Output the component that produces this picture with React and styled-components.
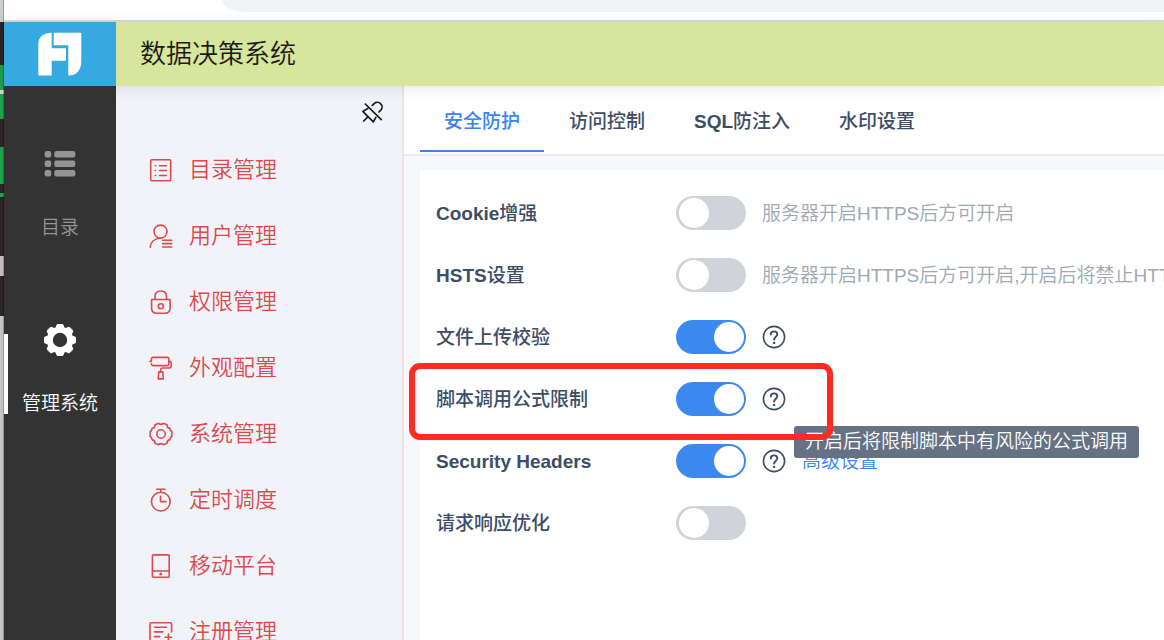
import React, { useState } from "react";
import styled, { createGlobalStyle } from "styled-components";

const GlobalStyle = createGlobalStyle`
  * {
    box-sizing: border-box;
  }

  body {
    margin: 0;
    overflow: hidden;
    background: #fff;
    font-family: "Liberation Sans", "Noto Sans CJK SC", sans-serif;
    font-size: 19px;
    font-weight: 350;
    line-height: 28px;
    color: #3d4d66;
  }

  button {
    padding: 0;
    border: 0;
    background: none;
    font: inherit;
    color: inherit;
    cursor: pointer;
  }

  a {
    color: inherit;
    text-decoration: none;
  }

  svg {
    display: block;
    flex: none;
  }
`;

const Screen = styled.div`
  display: flex;
  height: 100vh;
`;

const Desktop = styled.div`
  flex: none;
  width: 4px;
  background: linear-gradient(
    #c9cfcd 22px,
    #2c2426 22px 65px,
    #1ba34b 65px 90px,
    #d5d0d3 90px 94px,
    #1ba34b 94px 119px,
    #2c2426 119px 147px,
    #1ba34b 147px 184px,
    #2c2426 184px 193px,
    #1ba34b 193px 197px,
    #2c2426 197px 256px,
    #c4babf 256px 276px,
    #2c2426 276px 316px,
    #c3c4c5 316px
  );
  border-right: 1px solid rgba(0, 0, 0, 0.25);
`;

const Browser = styled.div`
  flex: 1;
  min-width: 0;
  display: flex;
  flex-direction: column;
`;

const AddressBar = styled.div`
  flex: none;
  height: 22px;
  padding-left: 218px;
  border-bottom: 2px solid #d9dadc;

  div {
    height: 12px;
    background: #f1f3f4;
    border-bottom-left-radius: 24px 12px;
  }
`;

const Header = styled.header`
  flex: none;
  display: flex;
  height: 64px;
  background: #d8e59c;
  box-shadow: 0 2px 14px rgba(0, 0, 0, 0.1);
  z-index: 1;

  .logo {
    display: flex;
    align-items: center;
    justify-content: center;
    width: 112px;
    background: #36a9e0;
  }

  h1 {
    margin: 0;
    padding-left: 24px;
    font-size: 26px;
    font-weight: 350;
    line-height: 64px;
    color: #1a1a1a;
  }
`;

const Body = styled.div`
  flex: 1;
  min-height: 0;
  display: flex;
`;

const Rail = styled.nav`
  flex: none;
  width: 112px;
  padding-top: 22px;
  background: #333;
  z-index: 2;
`;

const RailItem = styled.button`
  position: relative;
  display: flex;
  flex-direction: column;
  align-items: center;
  gap: 34px;
  width: 100%;
  height: 176px;
  padding-top: 40px;
  color: ${(props) => (props.$active ? "#fff" : "#949494")};

  &::before {
    content: "";
    display: ${(props) => (props.$active ? "block" : "none")};
    position: absolute;
    left: 0;
    top: 50px;
    width: 4px;
    height: 80px;
    background: #fff;
  }
`;

const Sidebar = styled.aside`
  flex: none;
  width: 288px;
  overflow: hidden;
  background: #f2f3f8;
  border-right: 2px solid #efe2e5;

  .pin {
    display: flex;
    justify-content: flex-end;
    padding: 15px 17px 12px;
    color: #1a1a1a;
  }

  ul {
    margin: 0;
    padding: 0;
    list-style: none;
  }
`;

const MenuLink = styled.a`
  display: flex;
  align-items: center;
  gap: 16px;
  height: 66px;
  padding-left: 33px;
  font-size: 22px;
  color: #dc4a4d;
`;

const Main = styled.main`
  flex: 1;
  min-width: 0;
  display: flex;
  flex-direction: column;
  background: #f7f8fa;
`;

const Tabs = styled.div`
  flex: none;
  display: flex;
  gap: 1px;
  height: 70px;
  padding: 0 16px 2px;
  background: #fff;
  border-bottom: 2px solid #e8eaed;
`;

const Tab = styled.button`
  padding: 8px 24px 0;
  border-bottom: 2px solid
    ${(props) => (props.$active ? "#3685f2" : "transparent")};
  font-weight: 500;
  white-space: nowrap;
  color: ${(props) => (props.$active ? "#3685f2" : "#3d4d66")};
`;

const Panel = styled.section`
  flex: 1;
  margin: 14px 0 0 16px;
  padding: 12px 0 0 16px;
  background: #fff;
`;

const Row = styled.div`
  position: relative;
  display: flex;
  align-items: center;
  gap: 16px;
  height: 62px;

  label {
    flex: none;
    width: 224px;
    padding-top: 2px;
    font-weight: 500;
  }
`;

const Latin = styled.span`
  font-weight: 700;
`;

const Switch = styled.input`
  appearance: none;
  flex: none;
  display: flex;
  align-items: center;
  justify-content: ${(props) => (props.checked ? "flex-end" : "flex-start")};
  width: 70px;
  height: 34px;
  margin: 0;
  padding: 0 2px 0 3px;
  border-radius: 17px;
  background: ${(props) => (props.checked ? "#3b89ef" : "#d0d3da")};
  cursor: pointer;

  &::before {
    content: "";
    width: 30px;
    height: 30px;
    border-radius: 50%;
    background: #fff;
  }
`;

const Note = styled.span`
  padding-top: 2px;
  white-space: nowrap;
  color: #a0a7b5;
`;

const Advanced = styled.a`
  padding-top: 2px;

  && {
    color: #3685f2;
  }
`;

const Help = styled.span`
  position: relative;
  flex: none;

  button {
    display: block;
  }
`;

const Tooltip = styled.span`
  position: absolute;
  left: 32px;
  top: 39px;
  padding: 2px 11px;
  border-radius: 3px;
  background: #667183;
  color: #fff;
  white-space: nowrap;
  z-index: 1;
`;

const Highlight = styled.div`
  position: absolute;
  left: -27px;
  top: -5px;
  width: 424px;
  height: 77px;
  border: 6px solid #fe2b20;
  border-radius: 11px;
  pointer-events: none;
  z-index: 2;
`;

const Logo = () => (
  <svg width="48" height="48" viewBox="36 30 48 48" fill="#fff">
    <path d="M38.3 75.6V44C38.3 37 43.5 32.7 51.7 32.7V48.3H66V60.7H51.7V75.6Z" />
    <path d="M53.7 32.7H81.3V61C81.3 70.5 76.5 75.6 68.3 75.6V45.3H53.7Z" />
  </svg>
);

const ListIcon = () => (
  <svg width="32" height="32" viewBox="0 0 32 32" fill="currentColor">
    {[3, 12.5, 22].map((y) => (
      <g key={y}>
        <rect x="0.7" y={y} width="6.5" height="6.5" rx="2" />
        <rect x="10.3" y={y} width="21" height="6.5" rx="2" />
      </g>
    ))}
  </svg>
);

const GearIcon = () => (
  <svg width="32" height="32" viewBox="-16 -16 32 32" fill="none">
    <circle r="10.2" stroke="currentColor" strokeWidth="6" />
    {[0, 45, 90, 135, 180, 225, 270, 315].map((angle) => (
      <path
        key={angle}
        d="M-5 -11L-3.6 -14.8Q-3.2 -16 -2 -16H2Q3.2 -16 3.6 -14.8L5 -11Z"
        fill="currentColor"
        transform={`rotate(${angle})`}
      />
    ))}
  </svg>
);

const Line = ({ children, size = 24 }) => (
  <svg
    width={size}
    height={size}
    viewBox="0 0 24 24"
    fill="none"
    stroke="currentColor"
    strokeWidth="1.6"
    strokeLinecap="round"
    strokeLinejoin="round"
  >
    {children}
  </svg>
);

const PinIcon = () => (
  <Line>
    <path
      strokeWidth="1.7"
      d="M4.3 3L20.3 18.6M11.3 4.4L13.2 2.6C15 1 18 1 19.8 2.8C21.6 4.6 21.4 7.4 19.8 9.2L18 11M6.7 7.6L1.8 10.4L12.3 20.9L14.9 16.4M7 15.6L2.7 20"
    />
  </Line>
);

const HelpIcon = () => (
  <Line>
    <circle cx="12" cy="12" r="10.6" />
    <path
      strokeWidth="1.9"
      d="M8.7 9.6C8.7 7.6 10 6.4 12 6.4C14 6.4 15.3 7.6 15.3 9.3C15.3 11.6 12.2 11.8 12.1 14.6"
    />
    <circle cx="12.1" cy="17.9" r="1.2" fill="currentColor" stroke="none" />
  </Line>
);

const menu = [
  {
    name: "目录管理",
    icon: (
      <>
        <rect x="1.7" y="1.7" width="20" height="21" rx="1" />
        <path d="M6.2 7.7H6.6M10.5 7.7H17.5M6.2 12.5H6.6M10.5 12.5H17.5M6.2 17.5H6.6M10.5 17.5H17.5" />
      </>
    ),
  },
  {
    name: "用户管理",
    icon: (
      <>
        <circle cx="11.5" cy="7.6" r="6.5" />
        <path d="M1.2 23.2C1.4 18 5.5 14.2 11.5 14.2M13.5 16.2H22.8M13.5 19.6H22.8M13.5 23H22.8" />
      </>
    ),
  },
  {
    name: "权限管理",
    icon: (
      <>
        <path d="M2.6 9.5H21.1V18C21.1 21.5 19 23.2 16 23.2H7.7C4.7 23.2 2.6 21.5 2.6 18ZM6 9.2V6.5C6 3 8.3 1 11.8 1C15.3 1 17.5 3 17.5 6.5V9.2" />
        <circle cx="11.8" cy="16.3" r="2.5" />
      </>
    ),
  },
  {
    name: "外观配置",
    icon: (
      <>
        <path d="M1.1 5.4H2.4V3.4Q2.4 1.4 4.4 1.4H18.5Q19.8 1.4 19.8 2.7V8.3Q19.8 9.6 18.5 9.6H4Q2.6 9.6 2.4 7.9M19.8 5.4H20.8Q22.2 5.4 22.2 7V9.8Q22.2 12 20 12H13.6Q11.7 12 11.7 13.8V15.8" />
        <path d="M9.8 15.9H13.8L14.3 22.9H9.2Z" />
      </>
    ),
  },
  {
    name: "系统管理",
    icon: (
      <>
        <path d="M9.6 1.3Q12 3.4 14.4 1.3L18 2.7Q17.9 6 21 6.4Q21 8.6 22.9 9.8V14.2Q21 15.4 21 17.6Q17.9 18 18 21.3L14.4 22.7Q12 20.6 9.6 22.7L6 21.3Q6.1 18 3 17.6Q3 15.4 1.1 14.2V9.8Q3 8.6 3 6.4Q6.1 6 6 2.7Z" />
        <circle cx="12" cy="12" r="4.2" />
      </>
    ),
  },
  {
    name: "定时调度",
    icon: (
      <>
        <circle cx="11.8" cy="13.6" r="9.4" />
        <path d="M7.6 1.2H16M11.8 1.2V4M11.5 8.3V13.6H17" />
      </>
    ),
  },
  {
    name: "移动平台",
    icon: (
      <>
        <rect x="3.4" y="0.9" width="16.8" height="22.3" rx="1" />
        <path d="M3.4 17H20.2" />
        <circle cx="11.8" cy="20.1" r="0.7" fill="currentColor" />
      </>
    ),
  },
  {
    name: "注册管理",
    icon: (
      <>
        <path d="M14.5 21.3H2.4Q1 21.3 1 19.9V4.2Q1 2.8 2.4 2.8H21.2Q22.6 2.8 22.6 4.2V12M5.5 7.3H17.5M5.5 11.9H13.8M5.5 16.6H10.8M16 17.3H22.8M19.4 14V20.6" />
      </>
    ),
  },
];

const tabs = [
  { name: "安全防护" },
  { name: "访问控制" },
  { latin: "SQL", name: "防注入" },
  { name: "水印设置" },
];

const settings = [
  {
    id: "cookie",
    latin: "Cookie",
    name: "增强",
    note: "服务器开启HTTPS后方可开启",
  },
  {
    id: "hsts",
    latin: "HSTS",
    name: "设置",
    note: "服务器开启HTTPS后方可开启,开启后将禁止HTTP",
  },
  { id: "upload", name: "文件上传校验", help: true },
  {
    id: "script",
    name: "脚本调用公式限制",
    help: true,
    tip: "开启后将限制脚本中有风险的公式调用",
    highlight: true,
  },
  {
    id: "headers",
    latin: "Security Headers",
    help: true,
    link: "高级设置",
  },
  { id: "response", name: "请求响应优化" },
];

const Setting = ({ item, checked, onChange }) => (
  <Row>
    <label htmlFor={item.id}>
      {item.latin && <Latin>{item.latin}</Latin>}
      {item.name}
    </label>
    <Switch
      id={item.id}
      type="checkbox"
      role="switch"
      checked={checked}
      onChange={onChange}
    />
    {item.note && <Note>{item.note}</Note>}
    {item.help && (
      <Help>
        <button type="button" aria-label="帮助">
          <HelpIcon />
        </button>
        {item.tip && <Tooltip role="tooltip">{item.tip}</Tooltip>}
      </Help>
    )}
    {item.link && <Advanced href="#advanced">{item.link}</Advanced>}
    {item.highlight && <Highlight />}
  </Row>
);

export default function App() {
  const [tab, setTab] = useState(0);
  const [enabled, setEnabled] = useState({
    upload: true,
    script: true,
    headers: true,
  });

  function toggle(id) {
    setEnabled({ ...enabled, [id]: !enabled[id] });
  }

  return (
    <Screen>
      <GlobalStyle />
      <Desktop />
      <Browser>
        <AddressBar>
          <div />
        </AddressBar>
        <Header>
          <div className="logo">
            <Logo />
          </div>
          <h1>数据决策系统</h1>
        </Header>
        <Body>
          <Rail>
            <RailItem type="button">
              <ListIcon />
              目录
            </RailItem>
            <RailItem type="button" $active>
              <GearIcon />
              管理系统
            </RailItem>
          </Rail>
          <Sidebar>
            <div className="pin">
              <button type="button" aria-label="取消固定">
                <PinIcon />
              </button>
            </div>
            <ul>
              {menu.map(({ name, icon }) => (
                <li key={name}>
                  <MenuLink href="#menu">
                    <Line>{icon}</Line>
                    {name}
                  </MenuLink>
                </li>
              ))}
            </ul>
          </Sidebar>
          <Main>
            <Tabs role="tablist">
              {tabs.map(({ latin, name }, index) => (
                <Tab
                  key={name}
                  type="button"
                  role="tab"
                  aria-selected={tab === index}
                  $active={tab === index}
                  onClick={() => setTab(index)}
                >
                  {latin && <Latin>{latin}</Latin>}
                  {name}
                </Tab>
              ))}
            </Tabs>
            <Panel>
              {settings.map((item) => (
                <Setting
                  key={item.id}
                  item={item}
                  checked={Boolean(enabled[item.id])}
                  onChange={() => toggle(item.id)}
                />
              ))}
            </Panel>
          </Main>
        </Body>
      </Browser>
    </Screen>
  );
}
